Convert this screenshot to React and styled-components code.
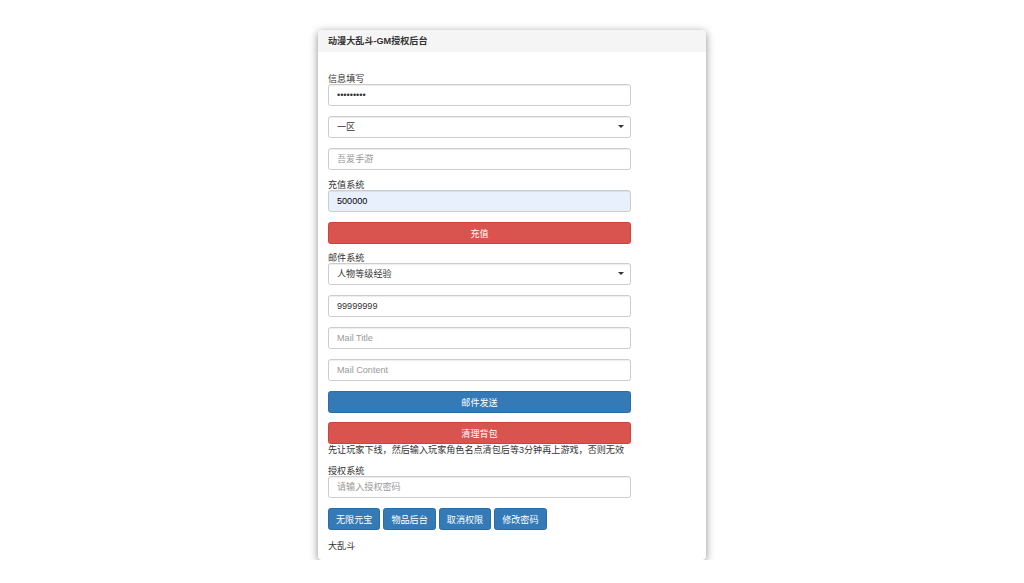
import React from "react";
import styled, { createGlobalStyle, css } from "styled-components";

const GlobalStyle = createGlobalStyle`
  html, body {
    margin: 0;
    padding: 0;
    background: #ffffff;
  }

  body {
    font-family: "Liberation Sans", Arial, "Noto Sans CJK SC", sans-serif;
    font-size: 9.1px;
    color: #333333;
  }
`;

const Page = styled.div`
  display: flex;
  justify-content: flex-start;
  padding: 30px 0 0 318px;
`;

const Panel = styled.div`
  width: 388px;
  background: #ffffff;
  border-radius: 4px;
  box-shadow: 0 2px 8px rgba(0, 0, 0, 0.45);
  overflow: hidden;
`;

const PanelHeading = styled.div`
  height: 22px;
  line-height: 22px;
  padding: 0 10px;
  background: #f5f5f5;
  font-weight: bold;
  font-size: 9.1px;
  color: #333333;
`;

const PanelBody = styled.div`
  padding: 22px 10px 8px;
`;

const Form = styled.div`
  width: 303px;
  display: flex;
  flex-direction: column;
`;

const Label = styled.div`
  line-height: 10px;
  height: 10px;
  color: #333333;
`;

const inputBase = css`
  box-sizing: border-box;
  width: 100%;
  height: 22px;
  margin: 0 0 10px;
  padding: 0 8px;
  border: 1px solid #cccccc;
  border-radius: 2.6px;
  box-shadow: inset 0 1px 1px rgba(0, 0, 0, 0.075);
  font-family: inherit;
  font-size: 9.1px;
  color: #333333;
  outline: none;

  &::placeholder {
    color: #999999;
  }
`;

const Input = styled.input`
  ${inputBase}
  background: ${(props) => (props.$filled ? "#e8f0fe" : "#ffffff")};
  color: ${(props) => (props.$filled ? "#000000" : "#333333")};
`;

const SelectWrap = styled.div`
  position: relative;
`;

const Select = styled.select`
  ${inputBase}
  appearance: none;
  background: #ffffff;
`;

const Caret = styled.span`
  position: absolute;
  right: 7px;
  top: 9px;
  width: 0;
  height: 0;
  border-left: 3px solid transparent;
  border-right: 3px solid transparent;
  border-top: 3px solid #333333;
  pointer-events: none;
`;

const Button = styled.button`
  box-sizing: border-box;
  height: 22px;
  padding: 0 7px;
  border-radius: 2.6px;
  font-family: inherit;
  font-size: 9.1px;
  color: #ffffff;
  cursor: pointer;
  background: ${(props) => (props.$variant === "danger" ? "#d9534f" : "#337ab7")};
  border: 1px solid
    ${(props) => (props.$variant === "danger" ? "#d43f3a" : "#2e6da4")};

  ${(props) =>
    props.$block &&
    css`
      width: 100%;
      margin-bottom: 9px;
    `}
`;

const Hint = styled.div`
  margin: -9px 0 9px;
  line-height: 13px;
`;

const ButtonRow = styled.div`
  display: flex;
  gap: 3px;
`;

const Footer = styled.div`
  margin-top: 10px;
  line-height: 12px;
`;

function Dropdown({ options }) {
  return (
    <SelectWrap>
      <Select defaultValue={options[0]}>
        {options.map((o) => (
          <option key={o}>{o}</option>
        ))}
      </Select>
      <Caret />
    </SelectWrap>
  );
}

export default function App() {
  const actions = ["无限元宝", "物品后台", "取消权限", "修改密码"];

  return (
    <>
      <GlobalStyle />
      <Page>
        <Panel>
          <PanelHeading>动漫大乱斗-GM授权后台</PanelHeading>
          <PanelBody>
            <Form>
              <Label>信息填写</Label>
              <Input type="password" defaultValue="123456789" />
              <Dropdown options={["一区", "二区"]} />
              <Input type="text" placeholder="吾爱手游" />

              <Label>充值系统</Label>
              <Input type="text" defaultValue="500000" $filled />
              <Button $variant="danger" $block>
                充值
              </Button>

              <Label>邮件系统</Label>
              <Dropdown options={["人物等级经验", "元宝", "金币"]} />
              <Input type="text" defaultValue="99999999" />
              <Input type="text" placeholder="Mail Title" />
              <Input type="text" placeholder="Mail Content" />
              <Button $block>邮件发送</Button>
              <Button $variant="danger" $block>
                清理背包
              </Button>
              <Hint>先让玩家下线，然后输入玩家角色名点清包后等3分钟再上游戏，否则无效</Hint>

              <Label>授权系统</Label>
              <Input type="text" placeholder="请输入授权密码" />
              <ButtonRow>
                {actions.map((a) => (
                  <Button key={a}>{a}</Button>
                ))}
              </ButtonRow>
              <Footer>大乱斗</Footer>
            </Form>
          </PanelBody>
        </Panel>
      </Page>
    </>
  );
}
